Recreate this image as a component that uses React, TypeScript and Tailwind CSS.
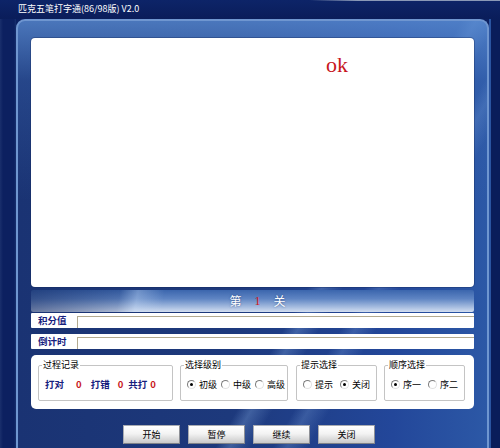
import React from "react";

type RadioProps = { checked?: boolean };

// Classic sunken radio button: dark arc top-left, light arc bottom-right
function Radio({ checked }: RadioProps) {
  return (
    <span className="relative inline-flex w-[9px] h-[9px] shrink-0 rounded-full bg-white border border-t-[#7d7d7d] border-l-[#7d7d7d] border-r-[#e2e2e2] border-b-[#e2e2e2] items-center justify-center">
      {checked && <span className="w-[3px] h-[3px] rounded-full bg-black" />}
    </span>
  );
}

type Opt = { label: string; checked?: boolean };

function RadioGroup({
  title,
  width,
  options,
  after,
}: {
  title: string;
  width: string;
  options: Opt[];
  after: string;
}) {
  return (
    <fieldset className={`${width} h-[42px] border border-[#c4c4c4] rounded-[2px]`}>
      <legend className="ml-[3px] px-px text-[9px] leading-[12px] text-black">{title}</legend>
      <div className="h-[27px] flex items-center pl-[6px]">
        {options.map((o, i) => (
          <div key={o.label} className={`flex items-center ${i > 0 ? after : ""}`}>
            <Radio checked={o.checked} />
            <span className="ml-[3px] text-[9px] leading-none text-black">{o.label}</span>
          </div>
        ))}
      </div>
    </fieldset>
  );
}

function Btn({ children }: { children: React.ReactNode }) {
  return (
    <button className="w-[57px] h-[19px] border border-[#a9acb2] border-r-[#8e9096] border-b-[#7f8288] bg-[linear-gradient(to_bottom,#ffffff_0%,#f3f3f3_45%,#dcdcdc_75%,#c9c9c9_100%)] text-[9px] leading-none text-black flex items-center justify-center">
      {children}
    </button>
  );
}

export default function App() {
  return (
    <div className="w-[500px] h-[448px] overflow-hidden bg-[#0b1f5f] flex flex-col font-['Noto_Sans_CJK_SC','Liberation_Sans',sans-serif] select-none">
      {/* title bar */}
      <div className="relative h-[19px] shrink-0 flex items-center pl-[18px] pb-[2px] text-white text-[9px] leading-none bg-[linear-gradient(to_bottom,#0d2468,#0a1d5a)]">
        <div className="absolute top-0 right-0 w-[190px] h-px bg-[linear-gradient(to_right,transparent,#8a99b7_25%,#8a99b7)]" />
        匹克五笔打字通(86/98版) V2.0
      </div>

      <div className="flex flex-1 min-h-0">
        <div className="w-[16px] shrink-0 bg-[linear-gradient(to_right,#1a2f6c_0px,#0c2060_3px,#0c2060_14px,#17306e_16px)]" />

        {/* main frame */}
        <div className="flex-1 min-w-0 rounded-t-[9px] border-2 border-b-0 border-[#6f96d0] pt-[17px] px-[13px] flex flex-col bg-[linear-gradient(to_bottom,rgba(90,140,210,0.75)_0px,rgba(60,105,180,0.35)_60px,transparent_180px),linear-gradient(120deg,transparent_62%,rgba(150,190,240,0.28)_64%,transparent_67%,transparent_70%,rgba(150,190,240,0.22)_72%,transparent_75%),linear-gradient(to_right,#1a3373_0%,#1d397c_45%,#23479a_80%,#2c58a6_100%)]">
          {/* display area */}
          <div className="h-[249px] shrink-0 bg-white rounded-[4px] shadow-[0_0_0_1px_rgba(20,40,90,0.35)] pl-[295px] pt-[16px]">
            <div className="text-[22px] leading-none h-[22px] text-[#c8161c] font-['Liberation_Serif',serif]">ok</div>
          </div>

          {/* level band */}
          <div className="mt-[3px] h-[22px] shrink-0 rounded-[2px] flex items-center justify-center gap-[13px] pl-[10px] text-[12px] leading-none bg-[linear-gradient(100deg,rgba(15,35,90,0.55)_0%,rgba(15,35,90,0.2)_20%,rgba(200,220,245,0.35)_24%,transparent_30%),linear-gradient(to_bottom,#3b66ad_0%,#5f85c3_40%,#a7bde0_78%,#d3def0_100%)]">
            <span className="text-white [text-shadow:0_0_2px_rgba(30,60,120,0.8)]">第</span>
            <span className="text-[#d4141a] font-['Liberation_Serif',serif] text-[12px]">1</span>
            <span className="text-white [text-shadow:0_0_2px_rgba(30,60,120,0.8)]">关</span>
          </div>

          {/* score row */}
          <div className="mt-px h-[15px] shrink-0 bg-white rounded-[1px] flex">
            <div className="w-[46px] pl-[7px] flex items-center text-[9.5px] leading-none font-bold text-[#16207e]">积分值</div>
            <div className="flex-1 mt-[3px] border-t border-l border-[#b3aa90]" />
          </div>

          {/* countdown row */}
          <div className="mt-[6px] h-[15px] shrink-0 bg-white rounded-[1px] flex">
            <div className="w-[46px] pl-[7px] flex items-center text-[9.5px] leading-none font-bold text-[#16207e]">倒计时</div>
            <div className="flex-1 mt-[3px] border-t border-l border-[#b3aa90]" />
          </div>

          {/* option groups */}
          <div className="mt-[6px] h-[54px] shrink-0 bg-white rounded-[5px] flex pl-[7px] pt-[4px] gap-[7px]">
            <fieldset className="w-[135px] h-[42px] border border-[#c4c4c4] rounded-[2px]">
              <legend className="ml-[3px] px-px text-[9px] leading-[12px] text-black">过程记录</legend>
              <div className="h-[27px] flex items-center pl-[6px] text-[9.5px] leading-none font-bold">
                <span className="text-[#16207e]">打对</span>
                <span className="ml-[12px] text-[#c8161c]">0</span>
                <span className="ml-[9px] text-[#16207e]">打错</span>
                <span className="ml-[8px] text-[#c8161c]">0</span>
                <span className="ml-[5px] text-[#16207e]">共打</span>
                <span className="ml-[3px] text-[#c8161c]">0</span>
              </div>
            </fieldset>
            <RadioGroup
              title="选择级别"
              width="w-[108px]"
              after="ml-[4px]"
              options={[{ label: "初级", checked: true }, { label: "中级" }, { label: "高级" }]}
            />
            <div className="ml-px">
              <RadioGroup
                title="提示选择"
                width="w-[81px]"
                after="ml-[7px]"
                options={[{ label: "提示" }, { label: "关闭", checked: true }]}
              />
            </div>
            <RadioGroup
              title="顺序选择"
              width="w-[81px]"
              after="ml-[7px]"
              options={[{ label: "序一", checked: true }, { label: "序二" }]}
            />
          </div>

          {/* buttons */}
          <div className="mt-[16px] ml-[92px] flex gap-[8px]">
            <Btn>开始</Btn>
            <Btn>暂停</Btn>
            <Btn>继续</Btn>
            <Btn>关闭</Btn>
          </div>
        </div>

        <div className="w-[11px] shrink-0 flex">
          <div className="w-[2px] bg-[#2a54a0]" />
          <div className="flex-1 bg-[#0a1d5a]" />
        </div>
      </div>
    </div>
  );
}
